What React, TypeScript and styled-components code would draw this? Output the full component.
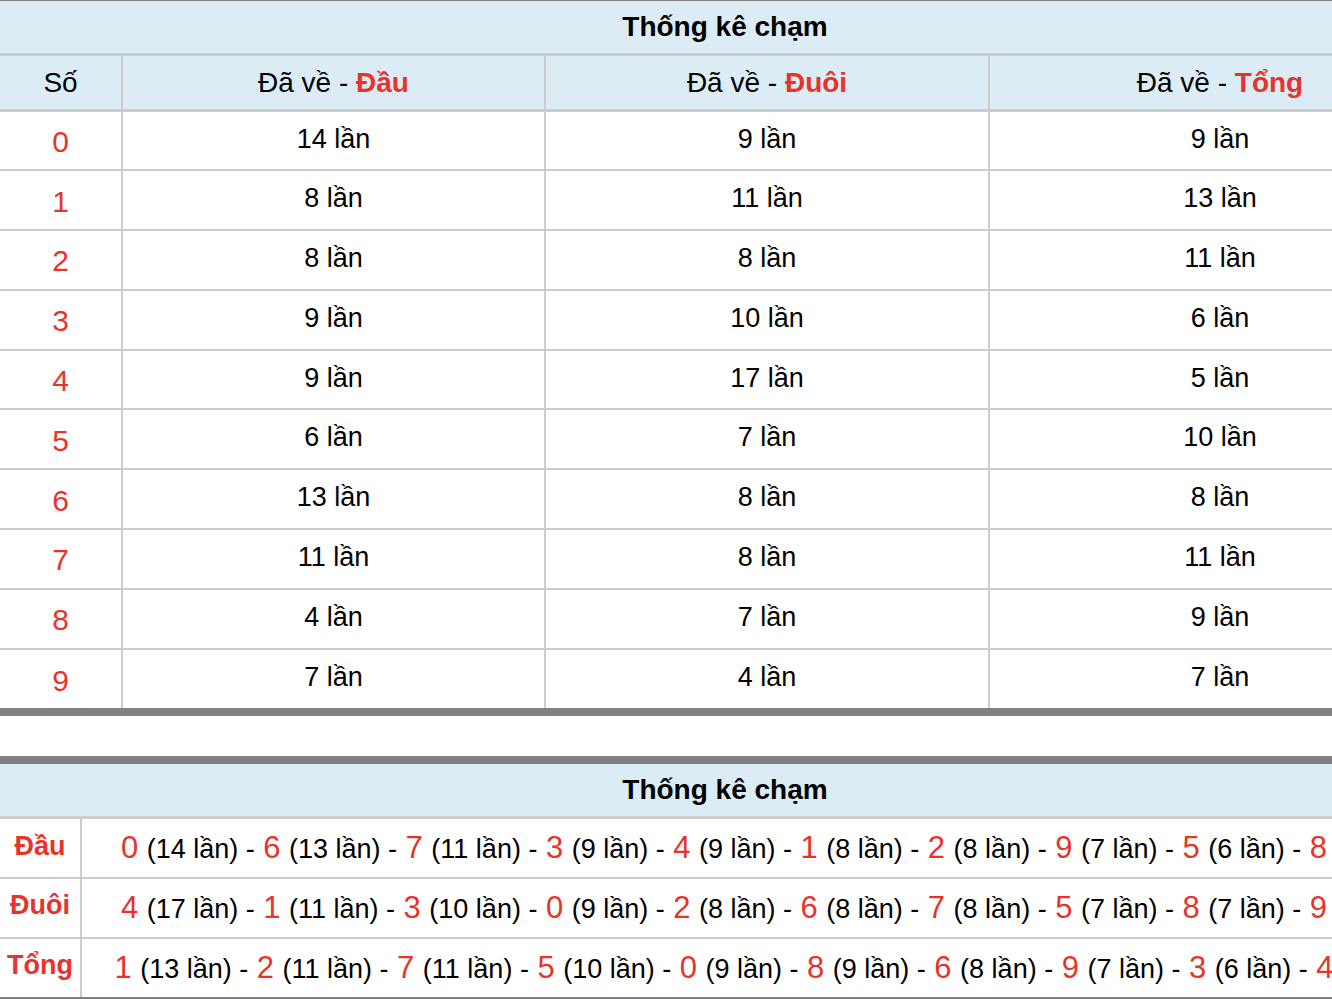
import styled, { createGlobalStyle } from 'styled-components';

const GlobalStyle = createGlobalStyle`
  html, body {
    margin: 0;
    padding: 0;
    overflow: hidden;
    background: #ffffff;
  }
  body {
    font-family: "Liberation Sans", Arial, Helvetica, sans-serif;
    color: #000000;
  }
`;

const RED = '#e8332a';
const LINE = '#cccccc';
const HEAD_BG = '#dcecf4';

const Page = styled.div`
  width: 1450px;
`;

const StatTable = styled.table<{ $top: number }>`
  width: 1450px;
  border-collapse: collapse;
  table-layout: fixed;
  border-top: ${(p) => p.$top}px solid #808080;
  border-bottom: 8px solid #808080;
  margin-bottom: 40px;
`;

const Col = styled.col<{ $w: number }>`
  width: ${(p) => p.$w}px;
`;

const TitleCell = styled.th`
  height: 52px;
  padding: 0;
  background: ${HEAD_BG};
  border-bottom: 3px solid ${LINE};
  font-size: 28px;
  font-weight: bold;
  text-align: center;
  vertical-align: middle;
`;

const HeadCell = styled.th`
  height: 53px;
  padding: 0;
  background: ${HEAD_BG};
  border-bottom: 3px solid ${LINE};
  font-size: 28px;
  font-weight: normal;
  text-align: center;
  vertical-align: middle;
  white-space: nowrap;
  &:not(:first-child) {
    border-left: 2px solid ${LINE};
  }
`;

const Strong = styled.b`
  color: ${RED};
`;

const BodyRow = styled.tr`
  height: 59.8px;
  &:last-child {
    height: 63.8px;
  }
  & + & > td {
    border-top: 2px solid ${LINE};
  }
`;

const Cell = styled.td`
  padding: 0;
  text-align: center;
  vertical-align: middle;
  white-space: nowrap;
  &:not(:first-child) {
    border-left: 2px solid ${LINE};
  }
`;

const NumCell = styled(Cell)`
  font-size: 30px;
  color: ${RED};
  padding-top: 3px;
`;

const CountCell = styled(Cell)`
  font-size: 27px;
  padding-bottom: 3px;
`;

const LabelCell = styled(Cell)`
  font-size: 27px;
  font-weight: bold;
  color: ${RED};
  padding-bottom: 4px;
`;

const ListCell = styled(Cell)`
  font-size: 27px;
`;

const Digit = styled.span`
  font-size: 31px;
  color: ${RED};
  padding: 0 1px;
`;

const dau = [14, 8, 8, 9, 9, 6, 13, 11, 4, 7];
const duoi = [9, 11, 8, 10, 17, 7, 8, 8, 7, 4];
const tong = [9, 13, 11, 6, 5, 10, 8, 11, 9, 7];

const ranked = (counts: number[]) =>
  counts
    .map((c, d) => ({ d, c }))
    .sort((a, b) => b.c - a.c || a.d - b.d);

const summary = [
  { label: 'Đầu', counts: dau },
  { label: 'Đuôi', counts: duoi },
  { label: 'Tổng', counts: tong },
];

const App = () => {
  return (
    <Page>
      <GlobalStyle />
      <StatTable $top={1}>
        <colgroup>
          <Col $w={122} />
          <Col $w={423} />
          <Col $w={444} />
          <Col $w={461} />
        </colgroup>
        <thead>
          <tr>
            <TitleCell colSpan={4}>Thống kê chạm</TitleCell>
          </tr>
          <tr>
            <HeadCell>Số</HeadCell>
            <HeadCell>
              Đã về - <Strong>Đầu</Strong>
            </HeadCell>
            <HeadCell>
              Đã về - <Strong>Đuôi</Strong>
            </HeadCell>
            <HeadCell>
              Đã về - <Strong>Tổng</Strong>
            </HeadCell>
          </tr>
        </thead>
        <tbody>
          {dau.map((_, i) => (
            <BodyRow key={i}>
              <NumCell>{i}</NumCell>
              <CountCell>{dau[i]} lần</CountCell>
              <CountCell>{duoi[i]} lần</CountCell>
              <CountCell>{tong[i]} lần</CountCell>
            </BodyRow>
          ))}
        </tbody>
      </StatTable>

      <StatTable $top={8}>
        <colgroup>
          <Col $w={81} />
          <Col $w={1369} />
        </colgroup>
        <thead>
          <tr>
            <TitleCell colSpan={2}>Thống kê chạm</TitleCell>
          </tr>
        </thead>
        <tbody>
          {summary.map((row) => (
            <BodyRow key={row.label}>
              <LabelCell>{row.label}</LabelCell>
              <ListCell>
                {ranked(row.counts).map((item, i) => (
                  <span key={item.d}>
                    <Digit>{item.d}</Digit> ({item.c} lần)
                    {i < 9 ? ' - ' : ''}
                  </span>
                ))}
              </ListCell>
            </BodyRow>
          ))}
        </tbody>
      </StatTable>
    </Page>
  );
};

export default App;
